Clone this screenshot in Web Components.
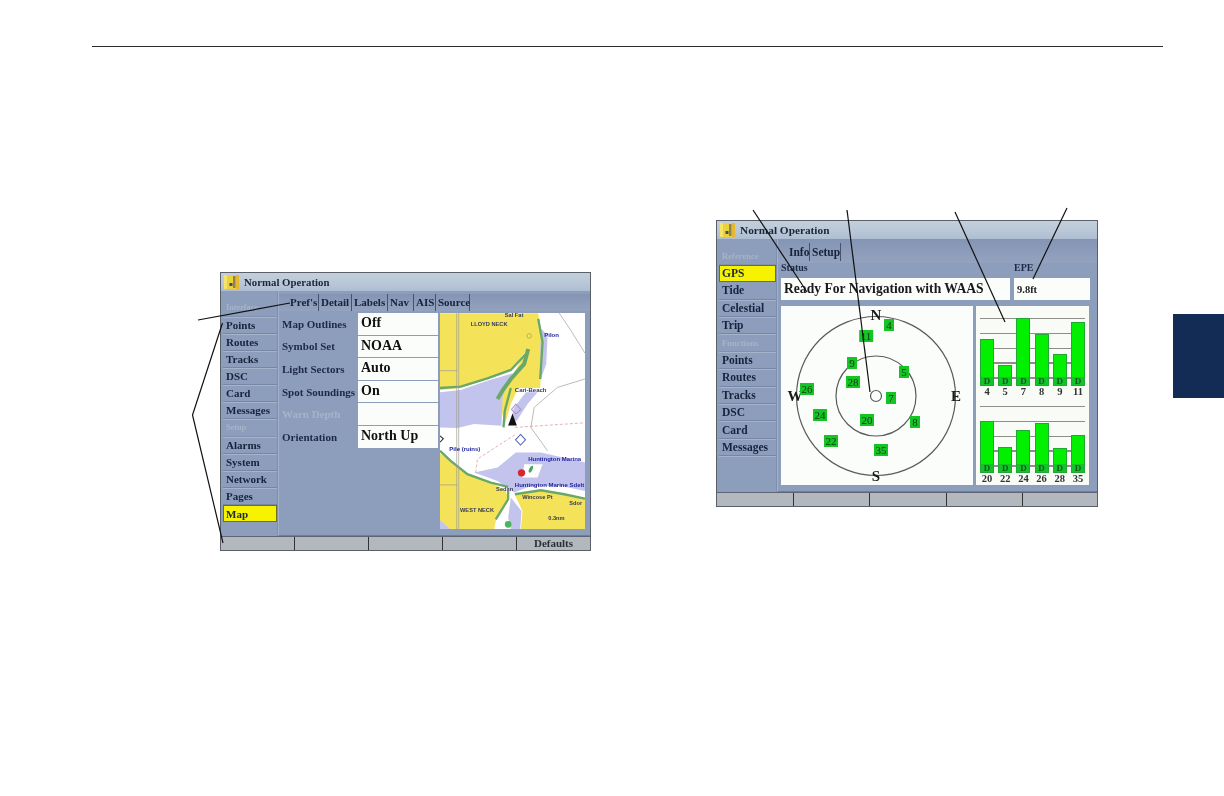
<!DOCTYPE html>
<html lang="en"><head><meta charset="utf-8"><title>GPS</title>
<style>
html,body{margin:0;padding:0;background:#fff}
body{width:1224px;height:796px;overflow:hidden;font-family:"Liberation Serif",serif}
</style></head>
<body>
<manual-page>
  <gps-device slot="left" style="--w:371px;--h:279px;--side:57px;--row:17.15px;--pt:8.5px;--title:18px;--fs:11px;--sep:74px" label="Normal Operation" keys=",,,,Defaults">
    <nav-item slot="nav" faint>Interface</nav-item>
    <nav-item slot="nav">Points</nav-item>
    <nav-item slot="nav">Routes</nav-item>
    <nav-item slot="nav">Tracks</nav-item>
    <nav-item slot="nav">DSC</nav-item>
    <nav-item slot="nav">Card</nav-item>
    <nav-item slot="nav">Messages</nav-item>
    <nav-item slot="nav" faint>Setup</nav-item>
    <nav-item slot="nav">Alarms</nav-item>
    <nav-item slot="nav">System</nav-item>
    <nav-item slot="nav">Network</nav-item>
    <nav-item slot="nav">Pages</nav-item>
    <nav-item slot="nav" active>Map</nav-item>
    <map-page></map-page>
  </gps-device>
  <gps-device slot="right" style="--w:382px;--h:287px;--side:60px;--row:17.42px;--pt:8.3px;--title:18px;--fs:11.5px;--sep:76.6px" label="Normal Operation" keys=",,,,">
    <nav-item slot="nav" faint>Reference</nav-item>
    <nav-item slot="nav" active>GPS</nav-item>
    <nav-item slot="nav">Tide</nav-item>
    <nav-item slot="nav">Celestial</nav-item>
    <nav-item slot="nav">Trip</nav-item>
    <nav-item slot="nav" faint>Functions</nav-item>
    <nav-item slot="nav">Points</nav-item>
    <nav-item slot="nav">Routes</nav-item>
    <nav-item slot="nav">Tracks</nav-item>
    <nav-item slot="nav">DSC</nav-item>
    <nav-item slot="nav">Card</nav-item>
    <nav-item slot="nav">Messages</nav-item>
    <gps-page></gps-page>
  </gps-device>
</manual-page>
<script>
const el=(html)=>{const t=document.createElement('template');t.innerHTML=html;return t;};

/* page frame */
const pageT=el(`<style>
:host{display:block;position:relative;width:1224px;height:796px;background:#fff;overflow:hidden}
.rule{height:1px;background:#2b2b2b;margin:46px 61px 0 92px}
.figs{display:flex;align-items:flex-start;padding:0 0 0 220px}
.l{margin-top:225px}
.r{margin-left:125px;margin-top:173px}
.tab{position:absolute;left:1173px;top:314px;width:51px;height:84px;background:#122c55}
svg{position:absolute;left:0;top:0;pointer-events:none}
</style>
<div class="rule"></div>
<div class="figs"><div class="l"><slot name="left"></slot></div><div class="r"><slot name="right"></slot></div></div>
<div class="tab"></div>
<svg width="1224" height="796" fill="none" stroke="#111" stroke-width="1.2">
<path d="M198 320L290 303"/>
<path d="M222.500 323L192.500 415L223 543"/>
<path d="M753 210L807 292"/>
<path d="M847 210L870 392"/>
<path d="M955 212L1005 322"/>
<path d="M1067 208L1033 279"/>
</svg>`);
customElements.define('manual-page',class extends HTMLElement{constructor(){super();this.attachShadow({mode:'open'}).append(pageT.content.cloneNode(true));}});

/* device frame */
const devT=el(`<style>
:host{display:grid;grid-template-rows:var(--title) minmax(0,1fr) 14px;grid-template-columns:minmax(0,1fr);width:var(--w);height:var(--h);box-sizing:border-box;border:1px solid #5a5f68;background:#8d9ebc;font:bold var(--fs) "Liberation Serif",serif;color:#16233c;filter:blur(.45px)}
.title{display:flex;align-items:center;gap:5px;padding-left:3px;background:linear-gradient(#c3cfdc,#b8c6d7 60%,#aebed3);font-size:calc(var(--fs) - .2px);color:#1c2634}
.title svg{flex:none}
.body{display:grid;grid-template-columns:var(--side) minmax(0,1fr);min-height:0;background:#8d9ebc}
nav{display:grid;grid-auto-rows:var(--row);align-content:start;padding-top:var(--pt);padding-left:2px;padding-right:1px;box-shadow:inset -1px 0 #7e8fae}
.main{min-width:0;border-left:1px solid #a3b2ca;border-bottom:1px solid #6e7e9d}
.keys{display:flex;background:#b3b7be;border-top:1px solid #5e6675}
.keys span{flex:none;width:var(--sep);box-sizing:border-box;border-right:1.500px solid #333;text-align:center;font-size:11px;line-height:13px;color:#2b2f36}
.keys span:last-child{flex:1;width:auto;border-right:0}
</style>
<div class="title"><svg width="15" height="14" viewBox="0 0 15 14"><rect width="15" height="14" fill="#ecd13e"/><rect x="0" y="0" width="3" height="14" fill="#f4e56a"/><rect x="9" y="1" width="2.500" height="12" fill="#8c8450"/><rect x="5.500" y="8" width="3" height="3" fill="#3d4a68"/><rect x="12" y="0" width="3" height="14" fill="#e6b832"/></svg><span id="t"></span></div>
<div class="body"><nav><slot name="nav"></slot></nav><div class="main"><slot></slot></div></div>
<div class="keys" id="k"></div>`);
customElements.define('gps-device',class extends HTMLElement{constructor(){super();const s=this.attachShadow({mode:'open'});s.append(devT.content.cloneNode(true));
s.getElementById('t').textContent=this.getAttribute('label');
const k=s.getElementById('k');(this.getAttribute('keys')||'').split(',').forEach(x=>{const e=document.createElement('span');e.textContent=x;k.append(e);});}});

/* nav item */
const navT=el(`<style>
:host{display:flex;align-items:center;box-sizing:border-box;padding-left:3px;border-bottom:1px solid #7687a6;box-shadow:0 1px #a6b4cb;white-space:nowrap;overflow:visible;color:#16233c}
:host([faint]){color:#a6b3c8;font-size:.75em;border-bottom-color:#8292ae}
:host([active]){background:#f6f200;color:#1a2a3a;border:1px solid #6d7020;box-shadow:none;padding-left:2px;margin-right:0}
</style><slot></slot>`);
customElements.define('nav-item',class extends HTMLElement{constructor(){super();this.attachShadow({mode:'open'}).append(navT.content.cloneNode(true));}});

/* tab strip */
const tabsT=el(`<style>
:host{display:flex;align-items:stretch;height:var(--th,18px);color:#16233c;background:linear-gradient(#8494b3,#93a3bf)}
span{box-sizing:border-box;flex:none;padding-left:2px;line-height:var(--th,18px);border-right:1px solid #46526c;white-space:nowrap}
</style><div id="h" style="display:contents"></div>`);
customElements.define('tab-strip',class extends HTMLElement{constructor(){super();const s=this.attachShadow({mode:'open'});s.append(tabsT.content.cloneNode(true));
const w=(this.getAttribute('widths')||'').split(',');
(this.getAttribute('items')||'').split(',').forEach((x,i)=>{const e=document.createElement('span');e.textContent=x;e.style.width=w[i]+'px';s.getElementById('h').append(e);});}});

/* value row */
const rowT=el(`<style>
:host{display:grid;grid-template-columns:76px 80px;align-items:center;height:22.6px}
:host([faint]) .k{color:#a6b3c8}
.k{white-space:nowrap;font-size:11px;color:#1c2a46}
.v{background:#fbfdfb;height:21.6px;line-height:20px;padding-left:3px;box-sizing:border-box;font-size:14px;color:#111}
</style><span class="k"><slot name="k"></slot></span><span class="v"><slot></slot></span>`);
customElements.define('value-row',class extends HTMLElement{constructor(){super();this.attachShadow({mode:'open'}).append(rowT.content.cloneNode(true));}});

/* map page */
const mapT=el(`<style>
:host{display:grid;grid-template-rows:21.500px 1fr;height:100%;--th:17px}
tab-strip{padding-left:9px;margin-top:3px}
.c{display:flex;padding-left:3px;min-height:0}
.rows{flex:none;width:157px}
.m{flex:none;width:145px;height:216.500px;display:block;margin-left:1px;background:#fff}
</style>
<tab-strip items="Pref's,Detail,Labels,Nav,AIS,Source" widths="31,33,36,26,22,34"></tab-strip>
<div class="c"><div class="rows">
<value-row><span slot="k">Map Outlines</span>Off</value-row>
<value-row><span slot="k">Symbol Set</span>NOAA</value-row>
<value-row><span slot="k">Light Sectors</span>Auto</value-row>
<value-row><span slot="k">Spot Soundings</span>On</value-row>
<value-row faint><span slot="k">Warn Depth</span></value-row>
<value-row><span slot="k">Orientation</span>North Up</value-row>
</div>
<svg class="m" viewBox="28 148 434 647" font-family="Liberation Sans" font-weight="bold">
<rect x="28" y="148" width="434" height="647" fill="#fff"/>
<path fill="#f4e258" d="M28 148H322L335 230L328 372L262 372L240 420L222 482L205 410L240 345L285 262L240 318L170 345L90 372L28 378Z"/>
<path fill="#c3c4ee" d="M28 385L90 378L170 350L245 328L215 400L212 485L130 480L80 492L28 490Z"/>
<path fill="#c3c4ee" d="M332 195L350 215L346 300L330 345L328 250Z"/>
<path fill="#c3c4ee" d="M250 430L285 385L320 385L290 420L258 470L240 470Z"/>
<path fill="#c3c4ee" d="M130 625L200 610L255 565L330 565L462 595V680L390 665L300 665L250 685L200 650Z"/>
<path fill="#fff" d="M280 600L335 600L320 640L275 640Z"/>
<path fill="#f4e258" d="M28 568L60 590L110 630L180 655L225 680L232 705L195 770L190 795H60L28 770Z"/>
<path fill="#c3c4ee" d="M28 768L60 795H28Z"/>
<path fill="#f4e258" d="M252 692L330 680L400 690L462 705V795H270L275 740Z"/>
<path fill="#c3c4ee" d="M240 700L272 740L268 795H240L232 760Z"/>
<g fill="none" stroke="#6aa86a" stroke-width="7">
<path d="M28 372L90 368L170 343L240 318L285 270"/>
<path d="M292 255L280 300L240 345L215 380L200 405" stroke-width="12"/>
<path d="M322 165L335 235L328 345"/>
<path d="M28 560L60 590L110 630L180 655L232 668"/>
<path d="M252 690L330 678L400 690L462 703"/>
<path d="M232 680L232 705L195 765"/>
<path d="M240 372L222 440L218 490"/>
</g>
<g fill="none" stroke="#9a9a92" stroke-width="2">
<path d="M78 148V795M84 148V795"/>
<path d="M28 320H80M28 662H80"/>
<path d="M385 148L420 200L462 268"/>
<path d="M462 345L380 370L310 430L300 490L350 560"/>
</g>
<path fill="none" stroke="#d98c8c" stroke-width="2" stroke-dasharray="9 6" d="M252 490L462 476M252 512L140 585L135 625"/>
<path d="M245 448L232 484H258Z" fill="#111"/>
<g fill="none" stroke="#b08ec9" stroke-width="3"><path d="M255 420L270 436L255 450L242 436Z"/></g>
<g fill="none" stroke="#5064b4" stroke-width="3"><path d="M269 511L284 527L269 543L254 527Z"/></g>
<circle cx="295" cy="216" r="7" fill="none" stroke="#a99a60" stroke-width="2"/>
<circle cx="272" cy="626" r="11" fill="#d8262e"/>
<circle cx="232" cy="780" r="10" fill="#4cb45c"/>
<ellipse cx="300" cy="615" rx="5" ry="11" fill="#4ca860" transform="rotate(25 300 615)"/>
<g font-size="17" fill="#333a55"><text x="120" y="185">LLOYD NECK</text><text x="222" y="158">Sal Fat</text><text x="252" y="385" font-size="18">Cari-Beach</text><text x="88" y="742">WEST NECK</text><text x="274" y="705">Wincose Pt</text><text x="415" y="722">Sdor</text><text x="352" y="768">0.3nm</text><text x="196" y="680">Sedan</text></g>
<g font-size="18" fill="#1a1f9a"><text x="340" y="218">Pilon</text><text x="56" y="560">Pile (ruins)</text><text x="292" y="590">Huntington Marina</text><text x="252" y="668">Huntington Marine Sdelt</text></g>
<path d="M28 515L38 524L28 534" fill="none" stroke="#223" stroke-width="3"/>
</svg>
</div>`);
customElements.define('map-page',class extends HTMLElement{constructor(){super();this.attachShadow({mode:'open'}).append(mapT.content.cloneNode(true));}});

/* sky plot */
const sats=[[4,889,325],[11,866,336],[9,852,363],[5,904,372],[28,853,382],[7,891,398],[26,807,389],[24,820,415],[20,867,420],[8,915,422],[22,831,441],[35,881,450]];
const skyT=el(`<style>
:host{display:block;position:relative;background:#fbfdfb;width:192px;height:179px;font-weight:bold;color:#1a1a1a;overflow:hidden}
svg{position:absolute;left:0;top:0}
b{position:absolute;transform:translate(-50%,-50%);font-size:15px;line-height:15px}
i{position:absolute;transform:translate(-50%,-50%);background:#16c426;color:#0a3a10;font:normal 11px/12px "Liberation Serif",serif;padding:0 1.500px;min-width:7px;text-align:center}
</style>
<svg width="192" height="179" fill="none" stroke="#5a5a5a" stroke-width="1.200"><circle cx="95" cy="90" r="79.500"/><circle cx="95" cy="90" r="40"/><circle cx="95" cy="90" r="5.500"/></svg>`);
customElements.define('sky-plot',class extends HTMLElement{constructor(){super();const s=this.attachShadow({mode:'open'});s.append(skyT.content.cloneNode(true));
[['N',95,9],['S',95,170],['W',14,90],['E',175,90]].forEach(([t,x,y])=>{const e=document.createElement('b');e.textContent=t;e.style.left=x+'px';e.style.top=y+'px';s.append(e);});
sats.forEach(([n,x,y])=>{const e=document.createElement('i');e.textContent=n;e.style.left=(x-781)+'px';e.style.top=(y-306)+'px';s.append(e);});}});

/* signal bars */
const barsT=el(`<style>
:host{display:block;width:113px;height:179px;background:#f8fbf6;box-sizing:border-box;padding:0 4px;color:#222}
.g{position:relative;display:flex;gap:4.1px;align-items:flex-end;height:var(--gh);margin-top:var(--gt);background:repeating-linear-gradient(#8f8f8a 0 1.500px,transparent 1.500px 14.8px)}
.b{flex:1;background:linear-gradient(#00f000,#00f000 calc(100% - 9px),#12c428 calc(100% - 9px));box-shadow:inset 0 0 0 1px #20a832;display:flex;align-items:flex-end;justify-content:center;font:bold 9px/10px "Liberation Serif",serif;color:#0a5a20;min-width:0}
.n{display:flex;gap:4.1px;font:bold 10.500px/10px "Liberation Serif",serif;margin-top:1px;color:#333}
.n span{flex:1;min-width:0;text-align:center;white-space:nowrap}
</style>`);
function barRow(s,vals,labs,gt,gh){const g=document.createElement('div');g.className='g';g.style.setProperty('--gt',gt+'px');g.style.setProperty('--gh',gh+'px');
vals.forEach(v=>{const b=document.createElement('div');b.className='b';b.style.height=v+'px';b.textContent='D';g.append(b);});
const n=document.createElement('div');n.className='n';labs.forEach(l=>{const e=document.createElement('span');e.textContent=l;n.append(e);});s.append(g,n);}
customElements.define('signal-bars',class extends HTMLElement{constructor(){super();const s=this.attachShadow({mode:'open'});s.append(barsT.content.cloneNode(true));
barRow(s,[47,21,68,52,32,64],[4,5,7,8,9,11],12,68);
barRow(s,[52,26,43,50,25,38],[20,22,24,26,28,35],9,67);}});

/* gps page */
const gpsT=el(`<style>
:host{display:grid;grid-template-rows:24px 15px 22px 6px 179px;height:100%;--th:18px;padding-left:3px;box-sizing:border-box;position:relative}
tab-strip{margin-top:4px;margin-left:6px;background:none}
.strip{position:absolute;left:0;right:0;top:0;height:24px;background:linear-gradient(#8494b3,#93a3bf);z-index:0}
tab-strip{position:relative;z-index:1}
.lab{display:flex;font-size:10px;color:#1c2a46;align-items:flex-start;line-height:10px}
.lab span:first-child{width:233px}
.f{display:flex;gap:4px}
.f span{background:#fbfdfb;display:flex;align-items:center;box-sizing:border-box;padding-left:3px;color:#1a1a1a;white-space:nowrap}
.s{width:229px;font-size:13.600px}
.e{width:76px;font-size:10.500px}
.p{display:flex;gap:3px}
</style>
<div class="strip"></div>
<tab-strip items="Info,Setup" widths="23,31"></tab-strip>
<div class="lab"><span>Status</span><span>EPE</span></div>
<div class="f"><span class="s">Ready For Navigation with WAAS</span><span class="e">9.8ft</span></div>
<div></div>
<div class="p"><sky-plot></sky-plot><signal-bars></signal-bars></div>`);
customElements.define('gps-page',class extends HTMLElement{constructor(){super();this.attachShadow({mode:'open'}).append(gpsT.content.cloneNode(true));}});
</script>
</body></html>
